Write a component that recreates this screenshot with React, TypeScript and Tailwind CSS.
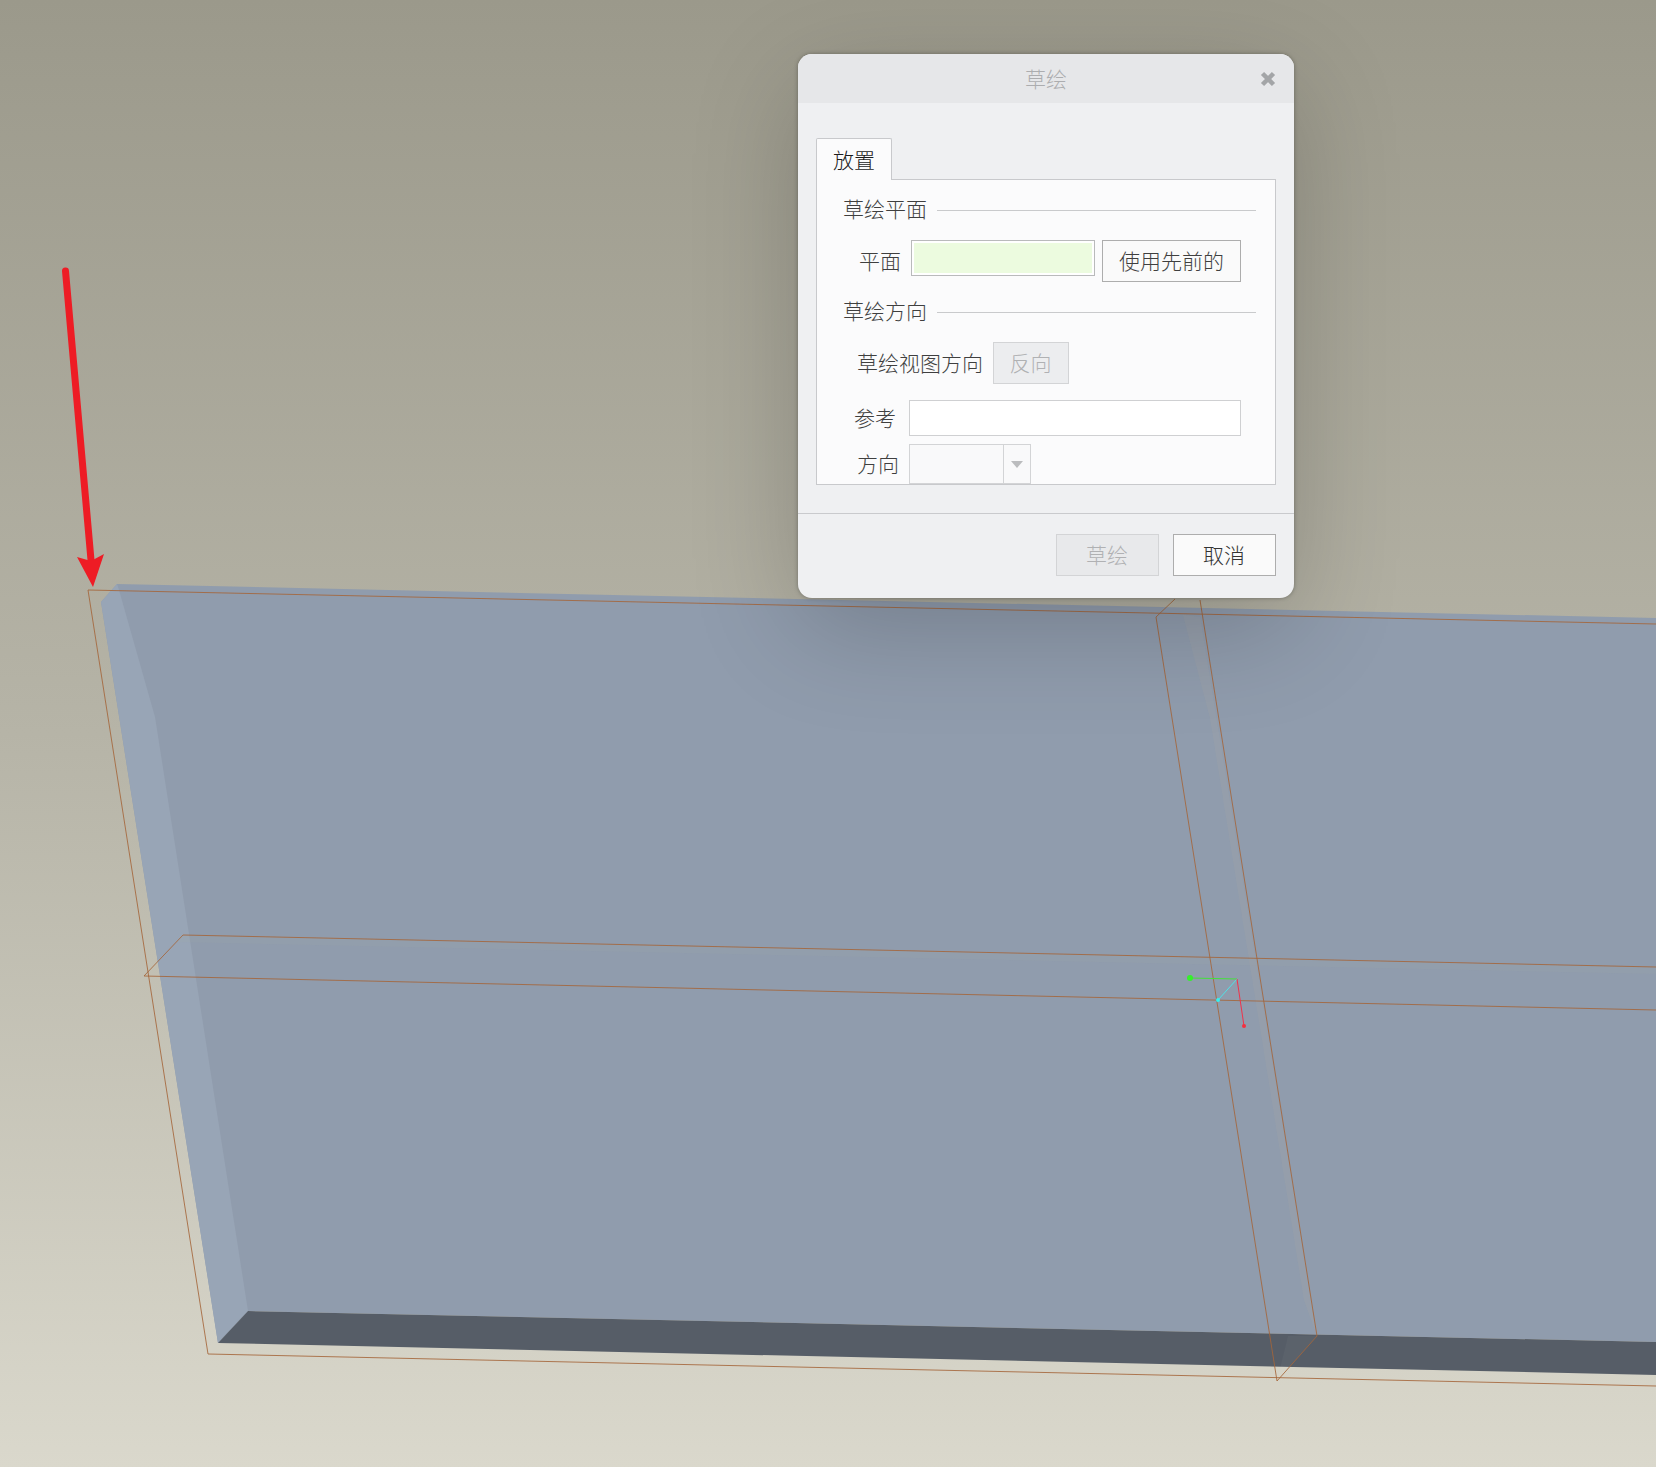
const font = "font-['Noto_Sans_CJK_SC','Liberation_Sans',sans-serif]";

function Scene() {
  return (
    <svg className="absolute inset-0" width="1656" height="1467" viewBox="0 0 1656 1467">
      {/* solid */}
      <polygon points="117,584 1656,618 1656,1342 248,1311 218,1343 101,602" fill="#909cad" />
      <polygon points="101,602 117,584 119,590 155,717 248,1311 218,1343" fill="#98a5b6" />
      <polygon points="218,1343 248,1311 1656,1342 1656,1375" fill="#565d67" />
      {/* translucent datum faces */}
      <polygon points="1183,615 1200,617 1317,1336 1304,1300 1210,718" fill="#a8aaa6" fillOpacity="0.22" />
      <polygon points="1277,1381 1317,1336 1288,1336" fill="#ffffff" fillOpacity="0.03" />
      <polygon points="183,935 1656,967 1656,974 176,942" fill="#a8aaa6" fillOpacity="0.12" />
      {/* datum planes */}
      <g fill="none" stroke="#a5653a" strokeOpacity="0.85" strokeWidth="1">
        <polyline points="1656,624 88,590 208,1354 1656,1386" />
        <polyline points="1656,967 183,935 144,976 1656,1010" />
        <polyline points="1175,599 1156,617 1277,1381 1317,1336 1200,600" />
      </g>
      {/* csys */}
      <g strokeWidth="1">
        <line x1="1237" y1="979" x2="1190" y2="978" stroke="#44e03c" />
        <line x1="1237" y1="979" x2="1218" y2="1000" stroke="#4fe3e6" />
        <line x1="1237" y1="979" x2="1244" y2="1026" stroke="#f0334a" />
      </g>
      <circle cx="1190" cy="978" r="3" fill="#35f02c" />
      <circle cx="1218" cy="1000" r="2" fill="#37f0f0" />
      <circle cx="1244" cy="1026" r="2" fill="#f5303f" />
      {/* callout arrow */}
      <line x1="65.5" y1="271" x2="91" y2="560" stroke="#ee1c25" strokeWidth="7" strokeLinecap="round" />
      <polygon points="93,587 77,557 91,561 104,554" fill="#ee1c25" />
    </svg>
  );
}

function Section({ title }: { title: string }) {
  return (
    <div className="flex h-[30px] items-center pl-[26px] pr-[19px]">
      <span className="pb-[3px] text-[21px] leading-none text-[#3f3f3f]">{title}</span>
      <div className="ml-[10px] h-px flex-1 bg-[#c9cacc]"></div>
    </div>
  );
}

export default function App() {
  return (
    <div className={`relative h-[1467px] w-[1656px] overflow-hidden bg-gradient-to-b from-[#9b998b] via-[#b6b4a7] to-[#dad8cc] font-light ${font}`}>
      <Scene />

      <div className="absolute left-[798px] top-[54px] flex h-[544px] w-[496px] flex-col overflow-hidden rounded-[14px] bg-[#eff0f2] shadow-[0_0_4px_rgba(0,0,0,0.3),0_30px_110px_rgba(0,0,0,0.2)]">
        <div className="relative flex h-[49px] shrink-0 items-center justify-center bg-[#e6e7e9] text-[21px] text-[#acadaf]">
          草绘
          <svg className="absolute left-[461px] top-[16px]" width="18" height="18" viewBox="0 0 18 18">
            <path d="M3.5 3.5 L14.5 14.5 M14.5 3.5 L3.5 14.5" stroke="#a3a5a7" strokeWidth="4.5" fill="none" />
          </svg>
        </div>

        <div className="flex flex-1 flex-col px-[18px] pt-[35px]">
          <div className="relative z-10 -mb-px flex h-[42px] w-[76px] items-center justify-center rounded-t-[2px] border border-b-0 border-[#c8c9cc] bg-[#fbfbfc] text-[21px] text-[#1c1c1c]">
            放置
          </div>

          <div className="h-[306px] overflow-hidden border border-[#c8c9cc] bg-[#fbfbfc] pt-[15px]">
            <Section title="草绘平面" />

            <div className="mt-[15px] flex items-start">
              <div className="mr-[10px] flex h-[42px] w-[84px] items-center justify-end pb-[1px] text-[21px] text-[#3f3f3f]">平面</div>
              <div className="h-[36px] w-[184px] border border-[#b9babb] bg-white p-[2px]">
                <div className="h-full w-full bg-[#ecfbdf]"></div>
              </div>
              <div className="ml-[7px] flex h-[42px] w-[139px] items-center justify-center border border-[#adadad] bg-[#fafafa] text-[21px] text-[#3f3f3f]">使用先前的</div>
            </div>

            <div className="mt-[15px]">
              <Section title="草绘方向" />
            </div>

            <div className="mt-[15px] flex items-start">
              <div className="mr-[10px] flex h-[42px] w-[166px] items-center justify-end text-[21px] text-[#3f3f3f]">草绘视图方向</div>
              <div className="flex h-[42px] w-[76px] items-center justify-center border border-[#d3d4d6] bg-[#ecedef] pr-[1px] text-[21px] text-[#b0b1b3]">反向</div>
            </div>

            <div className="mt-[16px] flex items-center">
              <div className="mr-[13px] w-[79px] pb-[1px] text-right text-[21px] leading-none text-[#3f3f3f]">参考</div>
              <div className="h-[36px] w-[332px] border border-[#cfd0d2] bg-white"></div>
            </div>

            <div className="mt-[8px] flex items-center">
              <div className="mr-[10px] w-[82px] pb-[2px] text-right text-[21px] leading-none text-[#3f3f3f]">方向</div>
              <div className="flex h-[40px] w-[122px] border border-[#d3d4d6] bg-[#f9f9fa]">
                <div className="flex-1 border-r border-[#d3d4d6]"></div>
                <div className="flex w-[26px] items-center justify-center">
                  <div className="h-0 w-0 border-x-[6px] border-t-[7px] border-x-transparent border-t-[#bbbcbe]"></div>
                </div>
              </div>
            </div>
          </div>

          <div className="mx-[-18px] mt-[28px] flex justify-end gap-[14px] border-t border-[#c9cacd] px-[18px] pt-[20px]">
            <div className="flex h-[42px] w-[103px] items-center justify-center border border-[#d3d4d6] bg-[#e8e9eb] pr-[1px] text-[21px] text-[#b0b1b3]">草绘</div>
            <div className="flex h-[42px] w-[103px] items-center justify-center border border-[#adadad] bg-[#fafafa] pr-[1px] text-[21px] text-[#333]">取消</div>
          </div>
        </div>
      </div>
    </div>
  );
}
